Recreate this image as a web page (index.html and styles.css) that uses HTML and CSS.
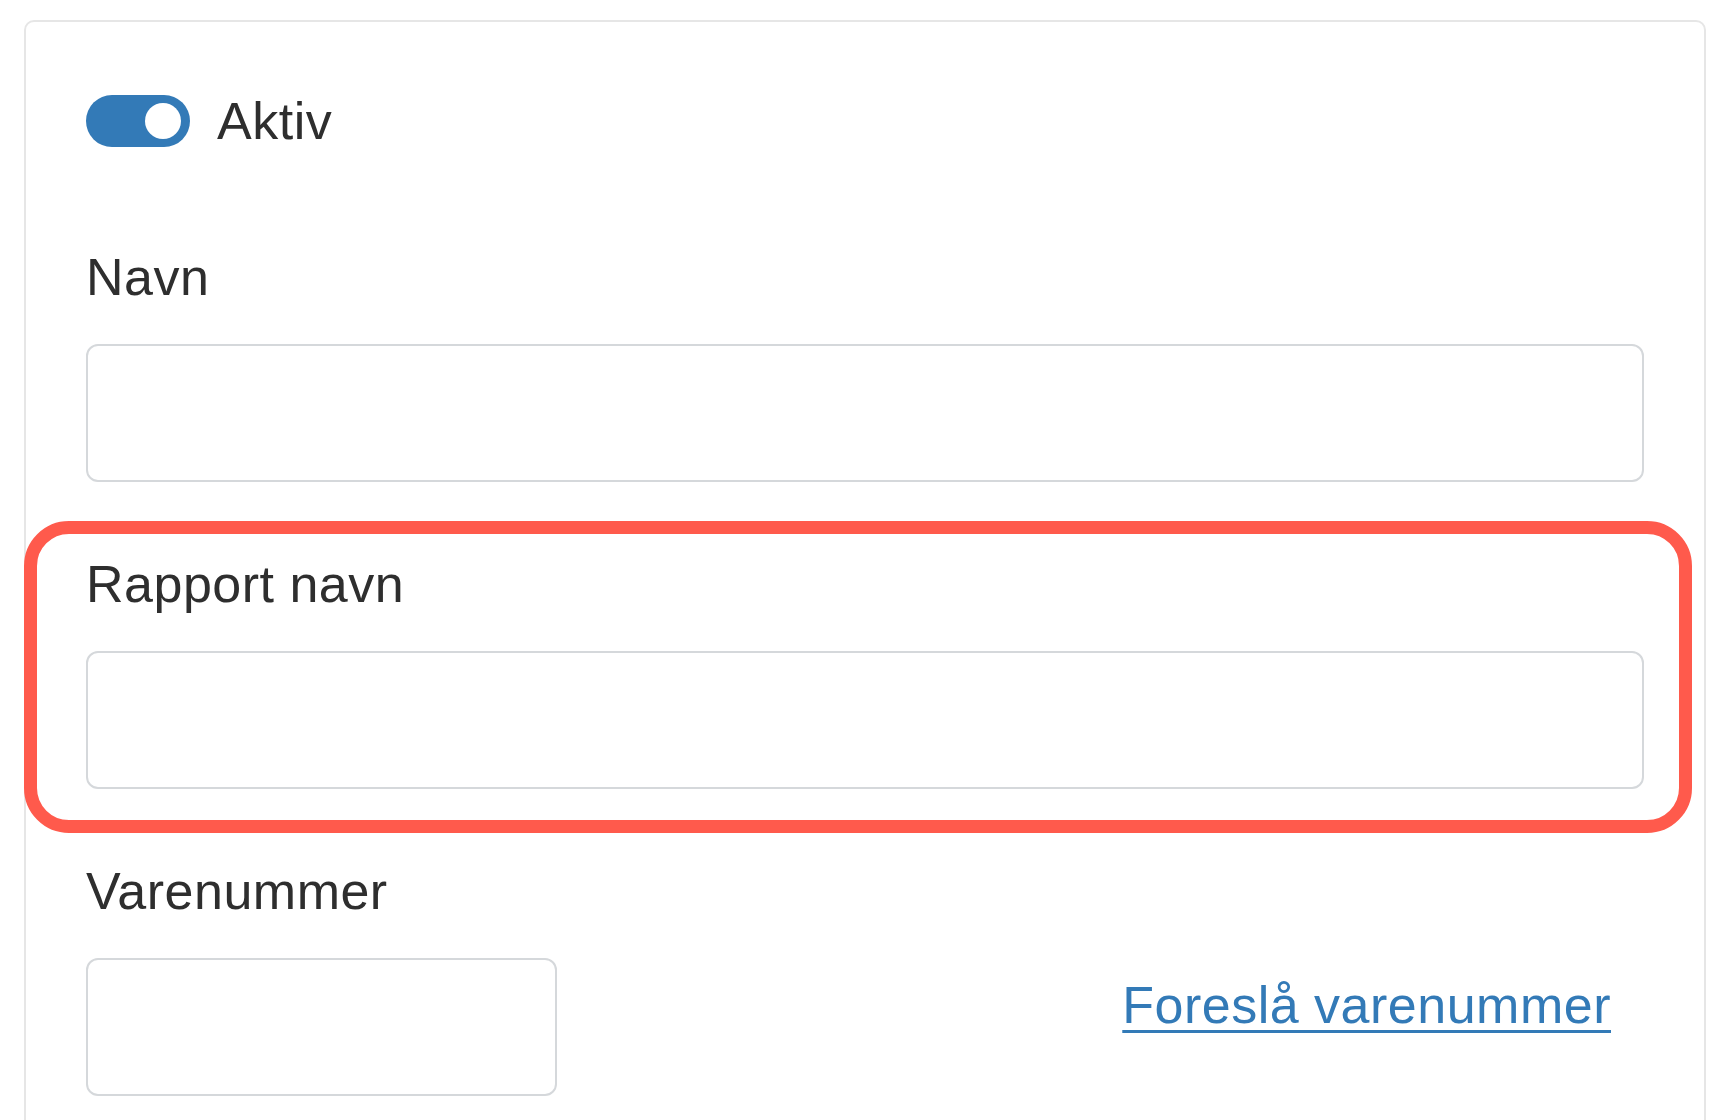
FILE: index.html
```html
<!DOCTYPE html>
<html>
  <head>
    <title>Vare</title>
    <link rel="stylesheet" href="styles.css">
  </head>
  <body>
    <div class="card">
      <div class="switch-row">
        <span class="switch"><span class="knob"></span></span>
        <span class="switch-label">Aktiv</span>
      </div>

      <div class="form-group">
        <label class="label">Navn</label>
        <input class="input" type="text" />
      </div>

      <div class="form-group marked">
        <label class="label">Rapport navn</label>
        <input class="input" type="text" />
      </div>

      <div class="form-group">
        <label class="label">Varenummer</label>
        <div class="number-row">
          <input class="input input-small" type="text" />
          <a href="#" class="suggest-link">Foreslå varenummer</a>
        </div>
      </div>
    </div>
  </body>
</html>
```

FILE: styles.css
```css
body {
  margin: 0;
  background-color: white;
  color: #2e2e2e;
  font-family: "Liberation Sans", Arial, Helvetica, sans-serif;
  font-size: 52px;
  line-height: 62px;
  letter-spacing: 0.5px;
}

.card {
  margin: 20px 16px 0 24px;
  padding: 68px 60px 68px 60px;
  border: solid 2px #e6e6e6;
  border-radius: 10px;
  background-color: white;
}

.switch-row {
  display: flex;
  align-items: center;
  gap: 27px;
  margin-bottom: 94px;
}

.switch {
  display: flex;
  justify-content: flex-end;
  align-items: center;
  box-sizing: border-box;
  width: 104px;
  height: 52px;
  padding: 0 9px;
  border-radius: 26px;
  background-color: #337ab7;
}

.knob {
  width: 36px;
  height: 36px;
  border-radius: 50%;
  background-color: white;
}

.form-group {
  margin-bottom: 71px;
}

.label {
  display: block;
  margin-bottom: 36px;
}

.input {
  display: block;
  box-sizing: border-box;
  width: 100%;
  height: 138px;
  margin: 0;
  border: solid 2px #d5d8db;
  border-radius: 12px;
  background-color: white;
  font-family: inherit;
  font-size: 52px;
}

/* red annotation frame */
.marked {
  position: relative;
}

.marked::before {
  content: "";
  position: absolute;
  top: -32px;
  bottom: -44px;
  left: -62px;
  right: -48px;
  border: solid 13px #ff5a4c;
  border-radius: 45px;
  pointer-events: none;
}

.number-row {
  display: flex;
  justify-content: space-between;
  align-items: flex-start;
}

.input-small {
  width: 471px;
}

.suggest-link {
  margin-top: 16px;
  margin-right: 33px;
  color: #337ab7;
  text-decoration: underline;
  text-decoration-thickness: 3px;
  text-underline-offset: 7px;
}
```
